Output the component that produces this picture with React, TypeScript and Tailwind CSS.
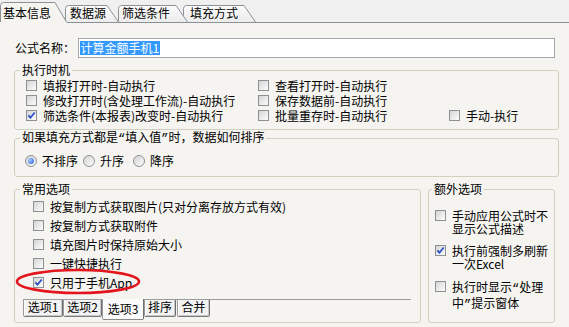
import React from 'react';

const FONT = "font-['Noto_Sans_CJK_SC',sans-serif]";

function CheckBox({ checked = false }: { checked?: boolean }) {
  return (
    <span className="flex h-[11px] w-[11px] shrink-0 items-center justify-center border border-[#8e9194] bg-gradient-to-br from-[#d4d4d4] via-[#e9e9e9] to-[#fcfcfc]">
      {checked && (
        <svg width="9" height="9" viewBox="0 0 9 9">
          <path d="M1.4 4.3 L3.5 6.7 L7.7 1.5" fill="none" stroke="#2a4fc6" strokeWidth="1.8" />
        </svg>
      )}
    </span>
  );
}

function Radio({ checked = false }: { checked?: boolean }) {
  return (
    <span className="flex h-[12px] w-[12px] shrink-0 items-center justify-center rounded-full border border-[#8e9194] bg-gradient-to-br from-[#d4d4d4] to-[#fcfcfc]">
      {checked && (
        <span className="h-[6px] w-[6px] rounded-full bg-[radial-gradient(circle_at_35%_35%,#a6ccff,#1f5ad4)]" />
      )}
    </span>
  );
}

function Q({ children }: { children: React.ReactNode }) {
  return <span className="font-['Liberation_Mono',monospace]">{children}</span>;
}

type TopTab = { label: string; w: number; top: number; diag: number; sel?: boolean; cls: string; textCls: string };

const topTabs: TopTab[] = [
  { label: '基本信息', w: 67, top: 2, diag: 55, sel: true, cls: 'w-[67px] h-[23px] z-40', textCls: 'pl-[3px]' },
  { label: '数据源', w: 54, top: 5, diag: 42, cls: 'w-[54px] h-[22px] ml-[-2px] z-30', textCls: 'pl-[5px]' },
  { label: '筛选条件', w: 70, top: 5, diag: 58, cls: 'w-[70px] h-[22px] ml-[-1px] z-20', textCls: 'pl-[4px]' },
  { label: '填充方式', w: 73, top: 5, diag: 61, cls: 'w-[73px] h-[22px] ml-[-5px] z-10', textCls: 'pl-[7px]' },
];

function TopTabs() {
  return (
    <div className="flex h-[23px] items-start border-b border-[#8d9196] bg-[#f0f0f0]">
      {topTabs.map((t) => {
        const H = t.sel ? 23 : 22;
        const fill = `M0 ${H} V${t.top + 3} Q0 ${t.top} 3 ${t.top} H${t.diag} L${t.w} ${H} Z`;
        const stroke = `M0.5 22 V${t.top + 3.5} Q0.5 ${t.top + 0.5} 3.5 ${t.top + 0.5} H${t.diag} L${t.w - 0.5} 22`;
        return (
          <div key={t.label} className={`relative shrink-0 ${t.cls}`}>
            <svg className="absolute left-0 top-0" width={t.w} height={H}>
              <defs>
                <linearGradient id={`tg-${t.label}`} x1="0" y1="0" x2="0" y2="1">
                  <stop offset="0" stopColor="#fcfcfc" />
                  <stop offset="1" stopColor="#ececec" />
                </linearGradient>
              </defs>
              <path d={fill} fill={t.sel ? '#f5f4f0' : `url(#tg-${t.label})`} />
              <path d={stroke} fill="none" stroke="#8d9196" />
            </svg>
            <span className={`relative block whitespace-nowrap pt-[7px] leading-[12px] ${t.textCls}`}>{t.label}</span>
          </div>
        );
      })}
    </div>
  );
}

function Item({ checked, children }: { checked?: boolean; children: React.ReactNode }) {
  return (
    <div className="flex items-center gap-[6px] whitespace-nowrap leading-[12px]">
      <CheckBox checked={checked} />
      <span>{children}</span>
    </div>
  );
}

function Extra({ checked, cls, l1, l2 }: { checked?: boolean; cls: string; l1: React.ReactNode; l2: React.ReactNode }) {
  return (
    <div className={`flex items-start gap-[6px] ${cls}`}>
      <span className="pt-[1px]">
        <CheckBox checked={checked} />
      </span>
      <div className="whitespace-nowrap leading-[13px]">
        <div>{l1}</div>
        <div>{l2}</div>
      </div>
    </div>
  );
}

const tabBase =
  'flex shrink-0 justify-center border border-t-0 border-[#9a9a9a] border-r-[#6f6f6f] rounded-b-[2px] leading-[12px] whitespace-nowrap';
const tabOff =
  'h-[17px] border-b-[#7a7a7a] bg-[#f3f3f3] pt-[1px] shadow-[inset_1px_0_0_#ffffff,inset_-1px_-1px_0_#c8c8c8]';

export default function App() {
  return (
    <div className={`h-[327px] w-[569px] overflow-hidden bg-[#f0f0f0] text-[12px] text-black ${FONT}`}>
      <TopTabs />
      <div className="h-[304px] bg-[#f5f4f0] px-[14px] pt-[15px]">
        {/* name row */}
        <div className="flex h-[20px] items-center">
          <span className="ml-[1px] w-[63px] whitespace-nowrap leading-[12px]">公式名称：</span>
          <div className="flex h-[20px] w-[481px] items-center border border-[#a3a8ae] bg-white pl-[1px]">
            <span className="h-[14px] bg-[#3399ff] px-[1px] leading-[14px] text-white">计算金额手机1</span>
          </div>
        </div>

        {/* 执行时机 */}
        <fieldset className="mt-[6px] w-[545px] rounded-[3px] border border-[#d0d0bf]">
          <legend className="ml-[5px] px-[2px] leading-[12px]">执行时机</legend>
          <div className="grid auto-rows-[15px] grid-cols-[232px_191px_1fr] items-center pb-[6px] pl-[11px] pt-[2px]">
            <Item>填报打开时-自动执行</Item>
            <Item>查看打开时-自动执行</Item>
            <div />
            <Item>修改打开时(含处理工作流)-自动执行</Item>
            <Item>保存数据前-自动执行</Item>
            <div />
            <Item checked>筛选条件(本报表)改变时-自动执行</Item>
            <Item>批量重存时-自动执行</Item>
            <Item>手动-执行</Item>
          </div>
        </fieldset>

        {/* 排序 */}
        <fieldset className="mt-[1px] w-[545px] rounded-[3px] border border-[#d0d0bf]">
          <legend className="ml-[5px] px-[2px] leading-[12px]">
            如果填充方式都是<Q>“</Q>填入值<Q>”</Q>时，数据如何排序
          </legend>
          <div className="my-[8px] flex h-[15px] items-center pl-[10px] leading-[12px]">
            <div className="flex w-[58px] items-center gap-[5px]">
              <Radio checked />
              <span>不排序</span>
            </div>
            <div className="flex w-[50px] items-center gap-[5px]">
              <Radio />
              <span>升序</span>
            </div>
            <div className="flex items-center gap-[5px]">
              <Radio />
              <span>降序</span>
            </div>
          </div>
        </fieldset>

        <div className="mt-[6px] flex gap-[7px]">
          {/* 常用选项 */}
          <fieldset className="w-[410px] rounded-[3px] border border-[#d0d0bf]">
            <legend className="ml-[5px] px-[2px] leading-[12px]">常用选项</legend>
            <div className="pl-[8px] pr-[9px]">
              <div className="relative border-b border-[#9c9c9c] pb-[7px] pl-[10px] pt-[2px]">
                <div className="grid auto-rows-[19px] items-center">
                  <Item>按复制方式获取图片(只对分离存放方式有效)</Item>
                  <Item>按复制方式获取附件</Item>
                  <Item>填充图片时保持原始大小</Item>
                  <Item>一键快捷执行</Item>
                  <Item checked>只用于手机App</Item>
                </div>
                <svg className="pointer-events-none absolute left-[-8px] top-[73px]" width="128" height="28">
                  <ellipse cx="63" cy="13.5" rx="61" ry="11.5" fill="none" stroke="#e3151d" strokeWidth="2.6" />
                </svg>
              </div>
              <div className="flex h-[22px] items-start">
                <div className={`${tabBase} ${tabOff} w-[40px]`}>选项1</div>
                <div className={`${tabBase} ${tabOff} w-[39px]`}>选项2</div>
                <div className={`${tabBase} relative z-10 mt-[-1px] h-[21px] w-[42px] border-b-[#8a8a8a] bg-[#fbfbfb] pt-[4px]`}>选项3</div>
                <div className={`${tabBase} ${tabOff} w-[32px]`}>排序</div>
                <div className={`${tabBase} ${tabOff} ml-[1px] w-[33px]`}>合并</div>
              </div>
            </div>
          </fieldset>

          {/* 额外选项 */}
          <fieldset className="w-[128px] rounded-[3px] border border-[#d0d0bf]">
            <legend className="ml-[3px] px-[2px] leading-[12px]">额外选项</legend>
            <div className="pl-[6px] pt-[14px]">
              <Extra cls="" l1="手动应用公式时不" l2="显示公式描述" />
              <Extra cls="mt-[9px]" checked l1="执行前强制多刷新" l2="一次Excel" />
              <Extra
                cls="mt-[10px]"
                l1={<>执行时显示<Q>“</Q>处理</>}
                l2={<>中<Q>”</Q>提示窗体</>}
              />
            </div>
          </fieldset>
        </div>
      </div>
    </div>
  );
}
